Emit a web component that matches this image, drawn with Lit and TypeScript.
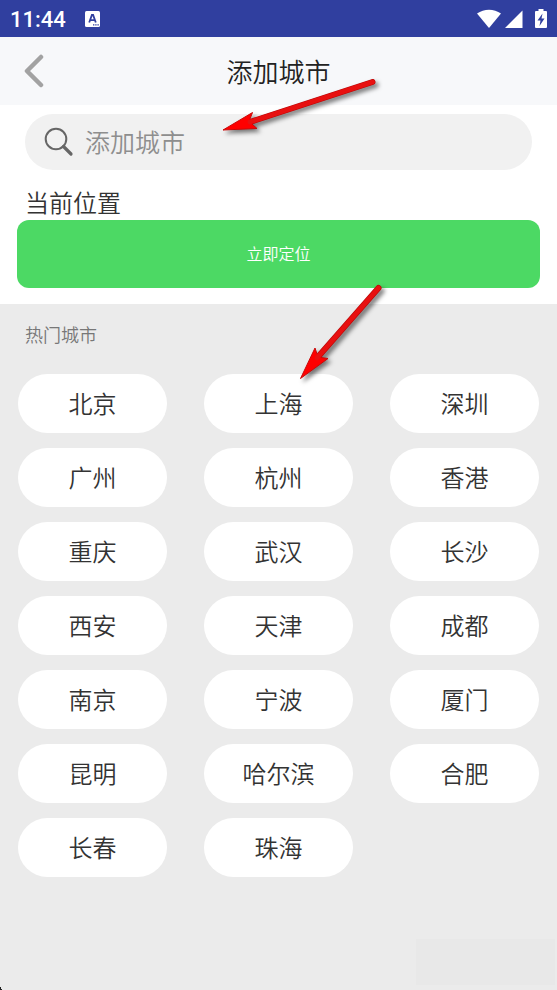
import { LitElement, html, css, svg } from "lit";
import { customElement, state } from "lit/decorators.js";

const CITIES = [
  "北京", "上海", "深圳",
  "广州", "杭州", "香港",
  "重庆", "武汉", "长沙",
  "西安", "天津", "成都",
  "南京", "宁波", "厦门",
  "昆明", "哈尔滨", "合肥",
  "长春", "珠海",
];

@customElement("status-bar")
class StatusBar extends LitElement {
  static styles = css`
    :host {
      display: flex;
      align-items: center;
      height: 37px;
      padding: 0 10px;
      background: #303f9f;
      color: #fff;
    }
    .time {
      font: 500 22px/35px Roboto, sans-serif;
      padding-top: 2px;
      margin-right: 19px;
    }
    .spacer {
      flex: 1;
    }
    svg {
      display: block;
    }
  `;

  render() {
    return html`
      <span class="time">11:44</span>
      <svg width="15" height="16" viewBox="0 0 15 16" aria-hidden="true">
        <rect x="0" y="0" width="15" height="16" rx="1.500" fill="#fff" />
        <path d="M4.200 11.500 6.900 4h1.200l2.700 7.500M5.400 9.200h4.400" fill="none" stroke="#303f9f" stroke-width="1.800" />
        <path d="M8 13.800h6" stroke="#303f9f" stroke-width="1.200" stroke-dasharray="1.400 0.800" />
      </svg>
      <span class="spacer"></span>
      <svg width="70" height="20" viewBox="0 0 70 20" aria-hidden="true">
        <path d="M0 4.600C7 -.6 17 -.6 24 4.600L12 19Z" fill="#fff" />
        <path d="M45.500 1.500V19H28Z" fill="#fff" />
        <path d="M61.500 0h5v2H69q1 0 1 1v15q0 1-1 1H59q-1 0-1-1V3q0-1 1-1h2.500Z" fill="#fff" />
        <path d="M65.500 4.500 60.500 11.500h3L62.500 17l5-7.500h-3Z" fill="#303f9f" />
      </svg>
    `;
  }
}

@customElement("app-root")
class AppRoot extends LitElement {
  @state() private query = "";

  static styles = css`
    :host {
      display: flex;
      flex-direction: column;
      position: relative;
      min-height: 100vh;
      overflow: hidden;
      background: #ebebeb;
      color: #333;
      font-family: "Noto Sans CJK SC", sans-serif;
      font-weight: 350;
    }
    * {
      box-sizing: border-box;
    }
    button,
    input {
      font-family: inherit;
      font-weight: inherit;
      border: 0;
      margin: 0;
      padding: 0 0 2px;
    }
    h1,
    h2 {
      margin: 0;
      font-weight: inherit;
    }
    .header {
      display: grid;
      grid-template-columns: 68px 1fr 68px;
      align-items: center;
      height: 68px;
      background: #f7f8fa;
    }
    .header h1 {
      text-align: center;
      font-size: 26px;
      line-height: 40px;
      color: #222;
    }
    .back {
      display: grid;
      place-items: center;
      height: 68px;
      padding: 0;
      background: none;
    }
    .location {
      padding: 9px 17px 16px;
      background: #fff;
    }
    .search {
      display: flex;
      align-items: center;
      gap: 10px;
      height: 56px;
      margin: 0 8px;
      padding: 0 18px;
      border-radius: 28px;
      background: #f1f1f1;
    }
    .search input {
      flex: 1;
      min-width: 0;
      height: 40px;
      background: none;
      outline: 0;
      font-size: 25px;
      color: #333;
    }
    .search input::placeholder {
      color: #8e8e8e;
      opacity: 1;
    }
    .location h2 {
      margin: 15px 8px 0;
      font-size: 24px;
      line-height: 34px;
      padding-bottom: 1px;
    }
    .locate {
      display: block;
      width: 100%;
      height: 68px;
      border-radius: 12px;
      background: #4cd964;
      color: #fff;
      font-size: 16px;
    }
    .popular {
      padding: 15px 18px;
    }
    .popular h2 {
      margin: 0 7px 25px;
      font-size: 18px;
      line-height: 30px;
      color: #777;
    }
    .cities {
      display: grid;
      grid-template-columns: repeat(3, 1fr);
      gap: 15px 37px;
    }
    .city {
      height: 59px;
      border-radius: 30px;
      background: #fff;
      color: #333;
      font-size: 24px;
    }
    .arrows {
      position: absolute;
      left: 0;
      top: 0;
      pointer-events: none;
      filter: drop-shadow(3px 3px 2px rgba(0, 0, 0, 0.5));
    }
    .patch {
      position: absolute;
      right: 2px;
      bottom: 5px;
      width: 139px;
      height: 46px;
      background: #e8e8e8;
    }
    .corner {
      position: absolute;
      left: 0;
      bottom: 0;
    }
    svg {
      display: block;
    }
  `;

  private arrow(shaft: string, head: string) {
    return svg`
      <path d=${shaft} stroke="#b80808" stroke-width="6" stroke-linecap="round" />
      <path d=${head} fill="#f00" stroke="#c80808" stroke-width="1" />
      <path d=${shaft} stroke="#e81010" stroke-width="4.800" stroke-linecap="round" />
    `;
  }

  render() {
    return html`
      <status-bar></status-bar>
      <header class="header">
        <button class="back" aria-label="返回">
          <svg width="20" height="34" viewBox="0 0 20 34" aria-hidden="true">
            <path d="M17 3 3 17l14 14" fill="none" stroke="#a2a2a2" stroke-width="4.500" stroke-linecap="round" stroke-linejoin="round" />
          </svg>
        </button>
        <h1>添加城市</h1>
      </header>
      <section class="location">
        <label class="search">
          <svg width="32" height="32" viewBox="0 0 32 32" aria-hidden="true">
            <circle cx="13" cy="13" r="10.300" fill="none" stroke="#666" stroke-width="2" />
            <path d="M20.500 20.500 28 28" stroke="#666" stroke-width="3.200" stroke-linecap="round" />
          </svg>
          <input
            type="text"
            aria-label="添加城市"
            placeholder="添加城市"
            .value=${this.query}
            @input=${(e: Event) => (this.query = (e.target as HTMLInputElement).value)}
          />
        </label>
        <h2>当前位置</h2>
        <button class="locate">立即定位</button>
      </section>
      <section class="popular">
        <h2>热门城市</h2>
        <div class="cities">
          ${CITIES.map((name) => html`<button class="city">${name}</button>`)}
        </div>
      </section>
      <div class="patch"></div>
      <svg class="corner" width="2" height="3" viewBox="0 0 2 3" aria-hidden="true">
        <path d="M0 0h1v2h1v1H0Z" fill="#222" />
      </svg>
      <svg class="arrows" width="400" height="400" viewBox="0 0 400 400" fill="none" aria-hidden="true">
        ${this.arrow("M372.500 82 250 122", "M223 130 252.500 112.500 250 119 252 124 257 128.500Z")}
        ${this.arrow("M378.500 288 317 358", "M300.500 378.500 315 348 317 354 321 357.500 328 358.500Z")}
      </svg>
    `;
  }
}
